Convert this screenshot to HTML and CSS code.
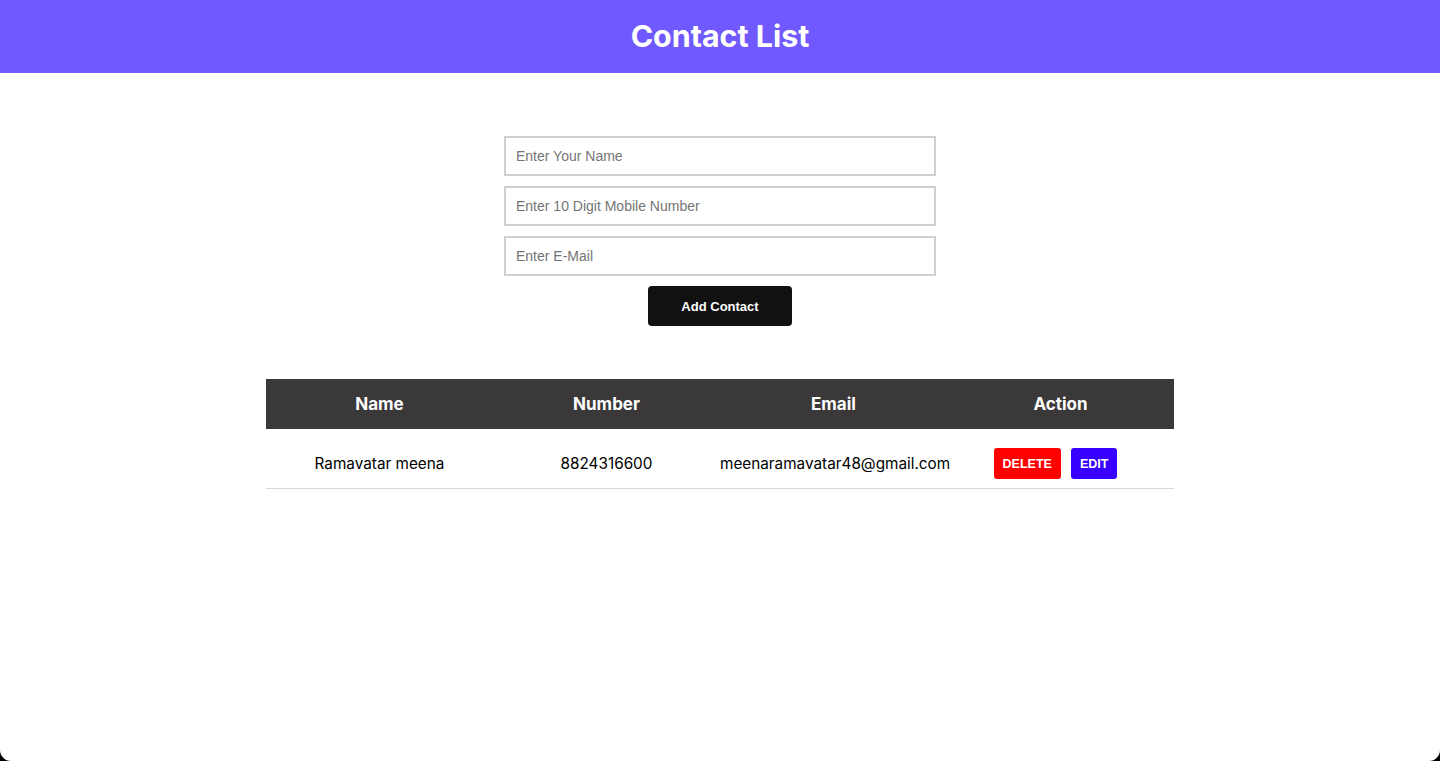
FILE: index.html
```html
<!DOCTYPE html>
<html lang="en">
<head>
<meta charset="utf-8">
<title>Contact List</title>
<link rel="stylesheet" href="styles.css">
</head>
<body>
<div class="app">
  <header class="topbar"><h1>Contact List</h1></header>
  <form class="form">
    <input class="field" type="text" placeholder="Enter Your Name">
    <input class="field" type="text" placeholder="Enter 10 Digit Mobile Number">
    <input class="field" type="text" placeholder="Enter E-Mail">
    <button class="add" type="button">Add Contact</button>
  </form>
  <table class="contacts">
    <thead>
      <tr><th>Name</th><th>Number</th><th>Email</th><th>Action</th></tr>
    </thead>
    <tbody>
      <tr>
        <td>Ramavatar meena</td>
        <td>8824316600</td>
        <td>meenaramavatar48@gmail.com</td>
        <td><button class="btn del" type="button">DELETE</button><button class="btn edit" type="button">EDIT</button></td>
      </tr>
    </tbody>
  </table>
</div>
</body>
</html>
```

FILE: styles.css
```css
html {
  background: #000;
  height: 100%;
}
body {
  margin: 0;
  height: 100%;
  font-family: Inter, "Liberation Sans", sans-serif;
}
.app {
  background: #fff;
  height: 100%;
  border-radius: 0 0 11px 11px;
  overflow: hidden;
}
.topbar {
  background: #705aff;
  height: 73px;
  display: flex;
  align-items: center;
  justify-content: center;
}
.topbar h1 {
  margin: 0;
  color: #fff;
  font-size: 30.4px;
  font-weight: 700;
  position: relative;
  top: -1px;
}
.form {
  width: 432px;
  margin: 63px auto 0;
  display: flex;
  flex-direction: column;
  align-items: center;
  gap: 10px;
}
.field {
  box-sizing: border-box;
  width: 432px;
  height: 40px;
  border: 2px solid #d0d0d0;
  padding: 0 10px;
  font-family: "Liberation Sans", Arial, sans-serif;
  font-size: 14px;
  outline: none;
}
.field::placeholder {
  color: #757575;
}
.add {
  width: 144px;
  height: 40px;
  border: none;
  border-radius: 4px;
  background: #111;
  color: #fff;
  font-family: "Liberation Sans", Arial, sans-serif;
  font-weight: 700;
  font-size: 13px;
}
.contacts {
  width: 908px;
  margin: 53px auto 0;
  border-collapse: collapse;
  table-layout: fixed;
}
.contacts th {
  background: #3a3839;
  color: #fff;
  font-size: 17px;
  font-weight: 700;
  height: 50px;
  padding: 0;
}
.contacts td {
  text-align: center;
  font-size: 15.3px;
  color: #000;
  padding: 19px 0 9px;
  border-bottom: 1px solid #d8d8d8;
  vertical-align: middle;
}
.btn {
  height: 31px;
  border: none;
  border-radius: 3px;
  color: #fff;
  font-family: "Liberation Sans", Arial, sans-serif;
  font-weight: 700;
  font-size: 12.5px;
  padding: 0 9px;
  margin-right: 10px;
  vertical-align: middle;
}
.del { background: #ff0000; }
.edit { background: #3700ff; }
```
